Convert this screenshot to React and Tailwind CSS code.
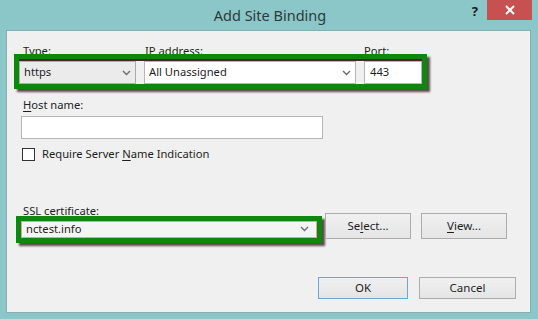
import React from "react"

const Chevron = () => (
  <svg width="9" height="6" viewBox="0 0 9 6" className="shrink-0">
    <polyline points="1,1 4.5,4.5 8,1" fill="none" stroke="#6d6d6d" strokeWidth="1.4" />
  </svg>
)

const U = ({ children }) => <span className="underline underline-offset-2">{children}</span>

const Button = ({ children, primary, className = "" }) => (
  <button
    className={
      "border text-[11.5px] text-[#1e1e1e] bg-gradient-to-b from-[#f0f0f0] to-[#e5e5e5] " +
      (primary ? "border-[#6aa7dc] " : "border-[#acacac] ") +
      className
    }
  >
    {children}
  </button>
)

export default function App() {
  return (
    <div
      className="w-[538px] h-[319px] bg-[#8bc6c9] flex flex-col overflow-hidden"
      style={{ fontFamily: '"Noto Sans", "Open Sans", sans-serif' }}
    >
      {/* Title bar */}
      <div className="h-[30px] flex items-start relative shrink-0">
        <div className="flex-1 text-center text-[14.5px] text-[#2d3a3b] pt-[5px] pl-[2px]">Add Site Binding</div>
        <div className="absolute right-[6px] top-0 flex items-start">
          <span className="text-[13px] font-bold text-[#1b1b1b] mr-[9px] mt-[2px]">?</span>
          <div className="w-[45px] h-[20px] bg-[#c75050] flex items-center justify-center">
            <svg width="10" height="10" viewBox="0 0 10 10">
              <path d="M1 1 L9 9 M9 1 L1 9" stroke="white" strokeWidth="2" />
            </svg>
          </div>
        </div>
      </div>

      {/* Client area */}
      <div className="flex-1 ml-[6px] mr-[7px] mb-[6px] bg-[#f0f0f0] border border-[#86aeb0] relative text-[11.2px] text-[#1e1e1e]">
        {/* Type / IP / Port labels */}
        <div className="flex pt-[12px] leading-[16px]">
          <span className="ml-[16px] w-[122px]">Type:</span>
          <span className="w-[219px]">IP address:</span>
          <span>Port:</span>
        </div>

        {/* Highlighted row */}
        <div className="relative ml-[7px] mt-[-5px] w-[413px] border-[5px] border-[#0d870d] shadow-[3px_3px_2px_rgba(40,20,20,0.75)] bg-[#f0f0f0]">
          <div className="border-t-[2px] border-[#4d2230] flex gap-[8px]">
            <div className="w-[117px] h-[23px] border border-[#acacac] bg-[#ebebeb] flex items-center px-[4px] justify-between">
              <span>https</span>
              <Chevron />
            </div>
            <div className="w-[212px] h-[23px] border border-[#b5b5b5] bg-white flex items-center px-[4px] justify-between">
              <span>All Unassigned</span>
              <Chevron />
            </div>
            <div className="flex-1 h-[23px] border border-[#b5b5b5] bg-white flex items-center px-[5px]">
              <span>443</span>
            </div>
          </div>
        </div>

        {/* Host name */}
        <div className="ml-[16px] mt-[8px] leading-[16px]">
          <U>H</U>ost name:
        </div>
        <div className="ml-[14px] mt-[3px] w-[302px] h-[23px] border border-[#b5b5b5] bg-white" />

        {/* SNI checkbox */}
        <div className="ml-[15px] mt-[7px] flex items-center gap-[7px]">
          <div className="w-[13px] h-[13px] border border-[#333] bg-white" />
          <span>
            Require Server <U>N</U>ame Indication
          </span>
        </div>

        {/* SSL certificate */}
        <div className="ml-[16px] mt-[40px] leading-[16px]">
          SSL certi<U>f</U>icate:
        </div>
        <div className="flex items-start mt-[-6px]">
          <div className="ml-[9px] w-[306px] border-[5px] border-[#0d870d] shadow-[3px_3px_2px_rgba(40,20,20,0.75)] mt-[3px]">
            <div className="h-[17px] border border-[#e0a0a0] bg-[#f4f4f4] flex items-center justify-between pl-[4px] pr-[7px]">
              <span>nctest.info</span>
              <Chevron />
            </div>
          </div>
          <Button className="ml-[3px] w-[86px] h-[26px]">
            Se<U>l</U>ect...
          </Button>
          <Button className="ml-[10px] w-[86px] h-[26px]">
            <U>V</U>iew...
          </Button>
        </div>

        {/* OK / Cancel */}
        <div className="flex justify-end gap-[11px] mt-[34px] mr-[14px]">
          <Button primary className="w-[90px] h-[22px]">
            OK
          </Button>
          <Button className="w-[97px] h-[22px]">Cancel</Button>
        </div>
      </div>
    </div>
  )
}
